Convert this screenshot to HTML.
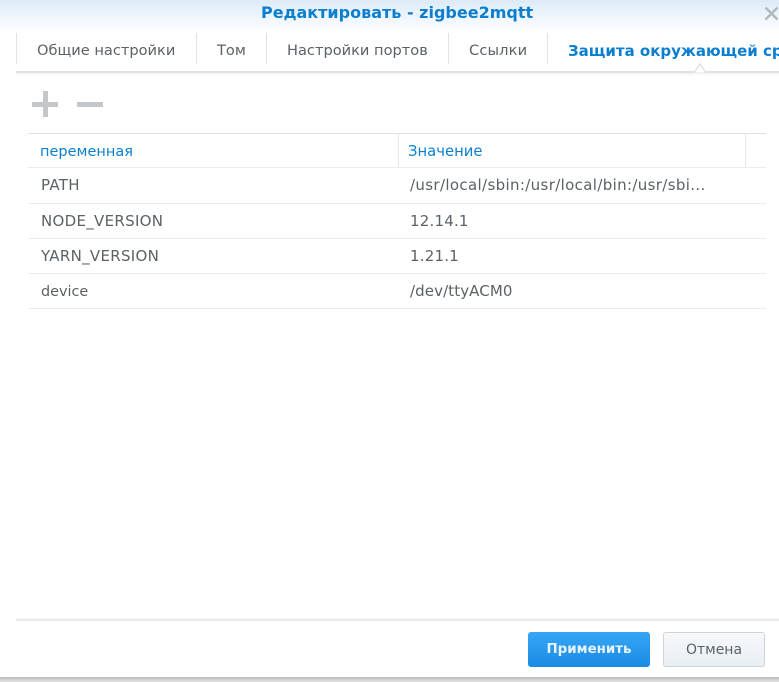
<!DOCTYPE html>
<html><head><meta charset="utf-8">
<style>
html,body{margin:0;padding:0;background:#fff}
#p{position:relative;width:779px;height:682px;overflow:hidden;background:#fff;font-family:"DejaVu Sans",sans-serif;font-size:14.6px;color:#5a6268}
#p div,#p span.t{position:absolute}
.t{white-space:nowrap;line-height:18px}
.v{width:1px;background:#dfe3e6}
.h{height:1px;background:#e8ecee;left:28px;width:738px}
.b{color:#0a7fd0}
.r{font-size:15px;letter-spacing:.3px}
</style></head><body>
<div id="p">
<div style="left:0;top:0;width:779px;height:33px;background:linear-gradient(#dcebf8,#fff)"></div>
<span class="t" style="left:261px;top:4px;font-size:16px;font-weight:bold;color:#0a7fd0">Редактировать - zigbee2mqtt</span>
<svg style="position:absolute;left:764px;top:6px" width="15" height="15"><path d="M1.5 1.5L13.5 13.5M13.5 1.5L1.5 13.5" stroke="#b4b8bb" stroke-width="2.4"/></svg>

<div class="v" style="left:16px;top:33px;height:31px"></div>
<div class="v" style="left:196px;top:33px;height:31px"></div>
<div class="v" style="left:266px;top:33px;height:31px"></div>
<div class="v" style="left:448px;top:33px;height:31px"></div>
<div class="v" style="left:547px;top:33px;height:31px"></div>
<span class="t" style="left:37px;top:42px">Общие настройки</span>
<span class="t" style="left:217px;top:42px">Том</span>
<span class="t" style="left:287px;top:42px">Настройки портов</span>
<span class="t" style="left:469px;top:42px;letter-spacing:.15px">Ссылки</span>
<span class="t" style="left:568px;top:42px;font-size:15px;font-weight:bold;color:#0a7fd0">Защита окружающей ср</span>
<div style="left:16px;top:71px;width:763px;height:2px;background:#dfe1e3"></div>
<div style="left:16px;top:73px;width:763px;height:3px;background:linear-gradient(#f3f4f5,#fff)"></div>
<svg style="position:absolute;left:680px;top:62px" width="32" height="12"><path d="M0 10.500H14L20 2L26 10.500" fill="#fff" stroke="#dfe1e3" stroke-width="1.500"/></svg>

<div style="left:32px;top:102px;width:26px;height:5px;background:#c3c7ca"></div>
<div style="left:42.500px;top:91px;width:5px;height:26px;background:#c3c7ca"></div>
<div style="left:77px;top:102px;width:26px;height:5px;background:#c3c7ca"></div>

<div class="h" style="top:133px;background:#d8e2e8"></div>
<div class="h" style="top:167px"></div>
<div class="v" style="left:398px;top:134px;height:33px;background:#e3e8eb"></div>
<div class="v" style="left:745px;top:134px;height:33px;background:#e3e8eb"></div>
<span class="t b" style="left:40px;top:143px;font-size:14.500px">переменная</span>
<span class="t b" style="left:408px;top:143px;font-size:14.800px">Значение</span>

<span class="t r" style="left:41px;top:176px">PATH</span>
<span class="t r" style="left:410px;top:176px;letter-spacing:.35px">/usr/local/sbin:/usr/local/bin:/usr/sbi...</span>
<div class="h" style="top:203px"></div>
<span class="t r" style="left:41px;top:212px">NODE_VERSION</span>
<span class="t r" style="left:410px;top:212px;letter-spacing:.2px">12.14.1</span>
<div class="h" style="top:238px"></div>
<span class="t r" style="left:41px;top:247px">YARN_VERSION</span>
<span class="t r" style="left:410px;top:247px;letter-spacing:.2px">1.21.1</span>
<div class="h" style="top:273px"></div>
<span class="t" style="left:41px;top:283px;font-size:14.400px">device</span>
<span class="t r" style="left:410px;top:282px;letter-spacing:.1px">/dev/ttyACM0</span>
<div class="h" style="top:308px"></div>

<div style="left:16px;top:618px;width:763px;height:3px;background:linear-gradient(#f8f8f8,#e2e3e4)"></div>
<div style="left:528px;top:632px;width:122px;height:35px;border-radius:3px;background:linear-gradient(#35a6f5,#1b8be4)"></div>
<span class="t" style="left:528px;top:641px;width:122px;text-align:center;font-size:13.400px;font-weight:bold;color:#e6f3fd">Применить</span>
<div style="left:663px;top:632px;width:100px;height:33px;border-radius:3px;border:1px solid #cdd4da;background:linear-gradient(#f7f9fb,#e9eef3)"></div>
<span class="t" style="left:663px;top:641px;width:102px;text-align:center;font-size:14px">Отмена</span>
<div style="left:0;top:677px;width:779px;height:5px;background:linear-gradient(#b9b9b9,#e4e4e4)"></div>
</div>
</body></html>
